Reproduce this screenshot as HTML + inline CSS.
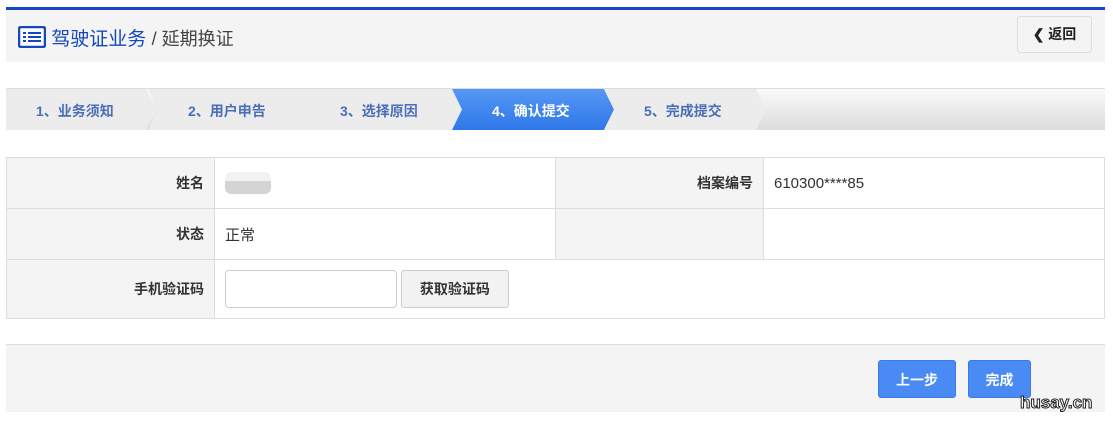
<!DOCTYPE html>
<html><head><meta charset="utf-8"><style>
*{box-sizing:border-box;margin:0;padding:0}
body{width:1113px;height:421px;background:#fff;font-family:"Liberation Sans","Noto Sans CJK SC",sans-serif;font-size:14px;color:#333;position:relative;overflow:hidden}
.abs{position:absolute}
.hdr{left:6px;top:7px;width:1099px;height:55px;background:#f4f4f4;border-top:3px solid #1447c0}
.title{left:12px;top:24px;font-size:19px;color:#1447c0;white-space:nowrap}
.title span{color:#444;font-size:18px}
.back{left:1017px;top:16px;width:75px;height:37px;border:1px solid #ddd;border-radius:3px;background:#f4f4f4;font-weight:bold;font-size:14px;line-height:35px;text-align:center;color:#222}
.steps{left:6px;top:88px;width:1099px;height:42px;border-top:1px solid #ddd;background:linear-gradient(#fafafa,#dcdcdc)}
.st{position:absolute;top:89px;height:41px;line-height:44px;font-weight:bold;color:#4a6fb8;font-size:14px;padding-left:30px;background:#ececec;clip-path:polygon(0 0,calc(100% - 10px) 0,100% 50%,calc(100% - 10px) 100%,0 100%,10px 50%)}
.st.a{background:linear-gradient(#5597f5,#2f78e8);color:#fff}
table{position:absolute;left:6px;top:157px;width:1099px;border-collapse:collapse}
td{border:1px solid #ddd;height:51px;padding:0 10px}
td.l{background:#f4f4f4;text-align:right;font-weight:bold;width:208px}
.ft{left:6px;top:344px;width:1099px;height:68px;background:#f4f4f4;border-top:1px solid #ddd}
.btn{height:38px;line-height:38px;border-radius:3px;background:#4a8af4;color:#fff;font-weight:bold;text-align:center;border:1px solid #3a7ae4}
</style></head><body>
<div class="abs hdr"></div>
<div class="abs title"><svg width="28" height="22" viewBox="0 0 28 22" style="vertical-align:-3px;margin-left:6px"><rect x="1" y="1" width="26" height="20" rx="2" fill="#fff" stroke="#1447c0" stroke-width="2.5"/><rect x="5" y="6" width="3" height="2" fill="#1447c0"/><rect x="10" y="6" width="13" height="2" fill="#1447c0"/><rect x="5" y="10" width="3" height="2" fill="#1447c0"/><rect x="10" y="10" width="13" height="2" fill="#1447c0"/><rect x="5" y="14" width="3" height="2" fill="#1447c0"/><rect x="10" y="14" width="13" height="2" fill="#1447c0"/></svg> 驾驶证业务 <span>/ 延期换证</span></div>
<div class="abs back">&#10094; 返回</div>
<div class="abs steps"></div>
<div class="st" style="left:6px;width:150px;clip-path:polygon(0 0,140px 0,150px 50%,140px 100%,0 100%)">1、业务须知</div>
<div class="st" style="left:148px;width:162px;padding-left:40px">2、用户申告</div>
<div class="st" style="left:300px;width:162px;padding-left:40px">3、选择原因</div>
<div class="st a" style="left:452px;width:162px;padding-left:40px">4、确认提交</div>
<div class="st" style="left:604px;width:162px;padding-left:40px">5、完成提交</div>
<table>
<tr><td class="l">姓名</td><td style="width:341px"><div style="width:46px;height:22px;background:linear-gradient(#f2f2f2 40%,#d4d4d4 40%);border-radius:6px"></div></td><td class="l">档案编号</td><td style="font-size:15px">610300****85</td></tr>
<tr><td class="l">状态</td><td style="font-size:15px">正常</td><td class="l"></td><td></td></tr>
<tr><td class="l" style="height:59px">手机验证码</td><td colspan="3"><div style="display:inline-block;vertical-align:middle;width:172px;height:38px;border:1px solid #ccc;border-radius:4px"></div> <div style="display:inline-block;vertical-align:middle;width:108px;height:38px;border:1px solid #ccc;border-radius:3px;background:#f2f2f2;text-align:center;line-height:36px;font-weight:bold">获取验证码</div></td></tr>
</table>
<div class="abs ft"></div>
<div class="abs btn" style="left:878px;top:360px;width:78px">上一步</div>
<div class="abs btn" style="left:968px;top:360px;width:63px">完成</div>
<div class="abs" style="left:1020px;top:393px;font-weight:bold;font-size:17px;color:#fff;-webkit-text-stroke:1px #222">husay.cn</div>
</body></html>
